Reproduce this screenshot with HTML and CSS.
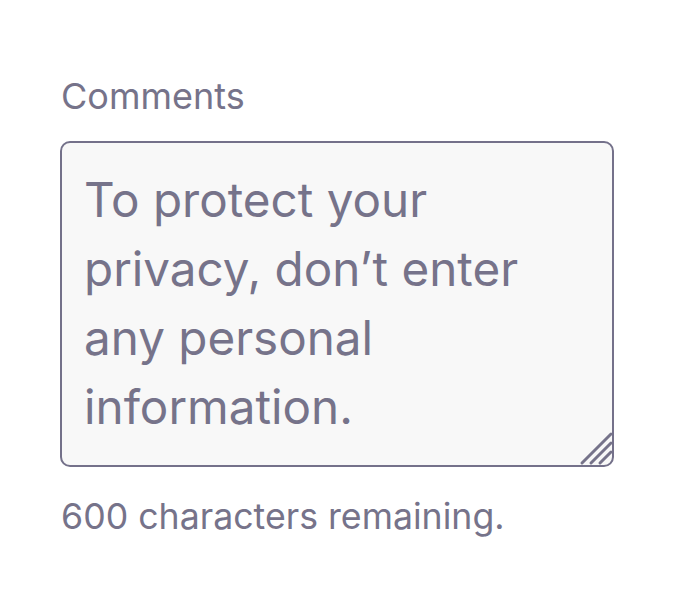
FILE: index.html
```html
<!DOCTYPE html>
<html lang="en">
  <head>
    <meta charset="UTF-8" />
    <meta name="viewport" content="width=device-width, initial-scale=1.0" />
    <title>Comments</title>
    <link rel="stylesheet" href="styles.css">
  </head>
  <body>
    <div class="field">
      <label class="field_label" for="comments">Comments</label>
      <div class="field_box">
        <textarea id="comments" class="field_input" placeholder="To protect your privacy, don’t enter any personal information."></textarea>
        <svg class="grip" width="34" height="34" viewBox="0 0 34 34">
          <line x1="4" y1="32" x2="33" y2="3" />
          <line x1="13" y1="32" x2="33" y2="12" />
          <line x1="22" y1="32" x2="33" y2="21" />
        </svg>
      </div>
      <p class="field_hint">600 characters remaining.</p>
    </div>
  </body>
</html>
```

FILE: styles.css
```css
* {
  padding: 0;
  margin: 0;
  box-sizing: border-box;
}
body {
  font-family: Inter, "Liberation Sans", sans-serif;
  color: #76738a;
  background: #fff;
}
.field {
  width: 554px;
  margin: 74px 0 0 60px;
}
.field_label {
  display: block;
  font-size: 36px;
  line-height: 44px;
  margin-left: 1px;
}
.field_box {
  position: relative;
  margin-top: 23px;
}
.field_input {
  display: block;
  width: 100%;
  height: 326px;
  padding: 22px 22px;
  border: 2px solid #74718a;
  border-radius: 10px;
  background: #f8f8f8;
  font-family: inherit;
  font-size: 47.6px;
  line-height: 69px;
  color: #76738a;
  resize: none;
  outline: none;
}
.field_input::placeholder {
  color: #76738a;
  opacity: 1;
}
.grip {
  position: absolute;
  right: 2px;
  bottom: 2px;
  overflow: visible;
  stroke: #76738a;
  stroke-width: 3;
  stroke-linecap: round;
}
.field_hint {
  margin-top: 27px;
  margin-left: 1px;
  font-size: 35.7px;
  line-height: 44px;
}
```
